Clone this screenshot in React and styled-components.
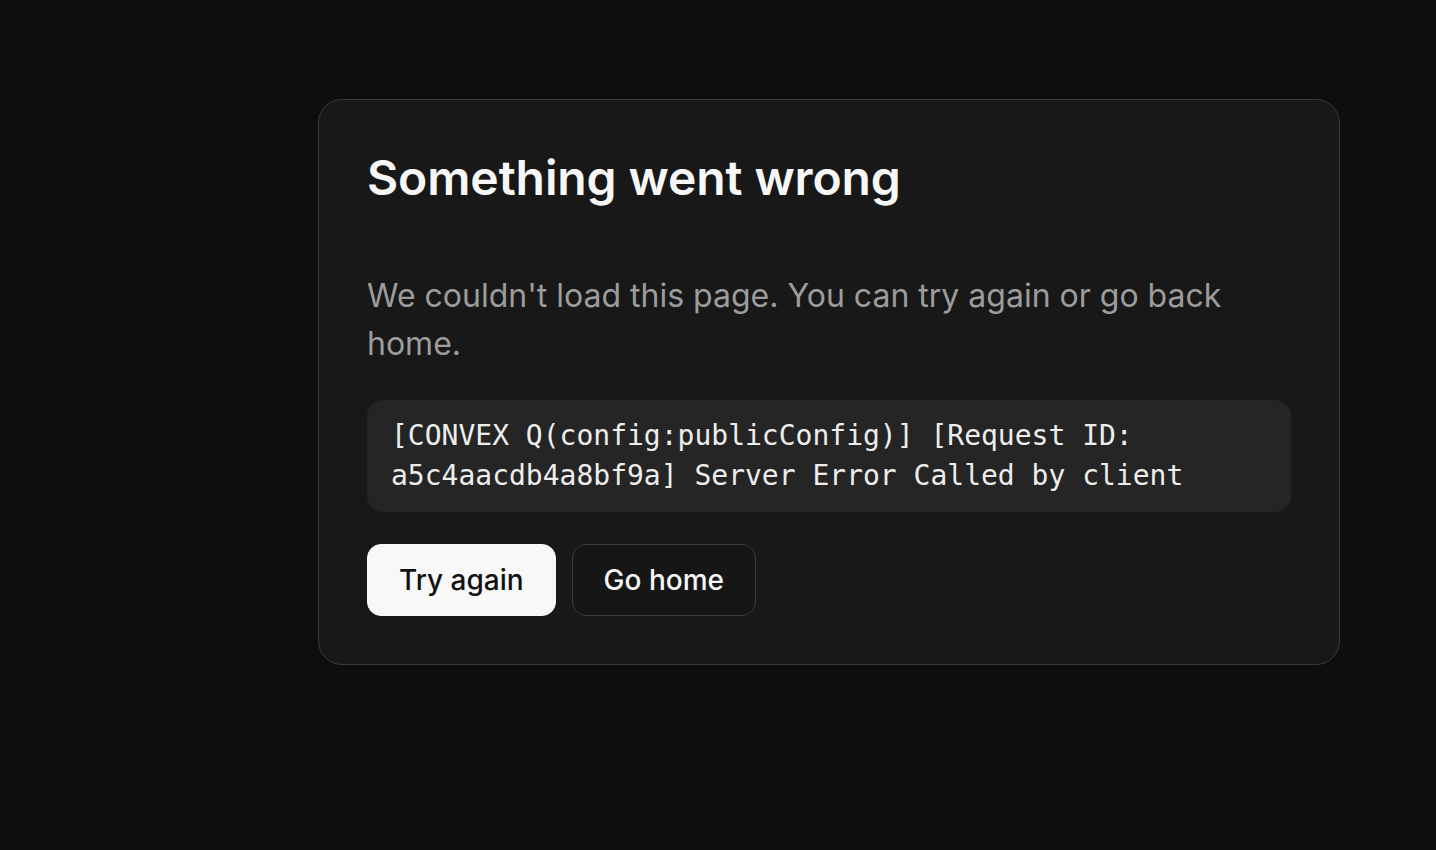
import React from "react";
import styled, { createGlobalStyle } from "styled-components";

const GlobalStyle = createGlobalStyle`
  html, body {
    margin: 0;
    padding: 0;
    background: #0e0e0e;
  }
  body {
    font-family: Inter, "Noto Sans", "Liberation Sans", sans-serif;
    -webkit-font-smoothing: antialiased;
  }
`;

const Shell = styled.div`
  display: grid;
  grid-template-columns: 222px 1fr;
  min-height: 850px;
  background: #0e0e0e;
`;

const Aside = styled.aside``;

const Main = styled.main`
  padding: 99px 96px 0;
`;

const Card = styled.section`
  box-sizing: border-box;
  width: 1022px;
  margin: 0 auto;
  padding: 48px;
  background: #181818;
  border: 1px solid #3a3a3a;
  border-radius: 24px;
`;

const Title = styled.h1`
  margin: 0 0 64px;
  font-size: 48px;
  line-height: 60px;
  font-weight: 600;
  color: #f7f7f7;
  letter-spacing: -0.1px;
`;

const Message = styled.p`
  margin: 0 0 32px;
  font-size: 32px;
  line-height: 48px;
  font-weight: 400;
  color: #9c9c9c;
`;

const ErrorDetail = styled.pre`
  margin: 0 0 32px;
  padding: 16px 24px;
  background: #252525;
  border-radius: 16px;
  font-family: "DejaVu Sans Mono", "Liberation Mono", monospace;
  font-size: 28px;
  line-height: 40px;
  color: #ededed;
  white-space: pre-wrap;
  word-break: normal;
`;

const Actions = styled.div`
  display: flex;
  gap: 16px;
`;

const Button = styled.button`
  box-sizing: border-box;
  height: 72px;
  padding: 0 31px;
  border-radius: 14px;
  font-family: inherit;
  font-size: 28px;
  font-weight: 500;
  line-height: 40px;
  cursor: pointer;
  border: 1px solid ${(p) => (p.$primary ? "#f8f8f8" : "#3c3c3c")};
  background: ${(p) => (p.$primary ? "#f8f8f8" : "#161616")};
  color: ${(p) => (p.$primary ? "#121212" : "#f5f5f5")};
`;

export default function App() {
  return (
    <>
      <GlobalStyle />
      <Shell>
        <Aside />
        <Main>
          <Card>
            <Title>Something went wrong</Title>
            <Message>
              We couldn't load this page. You can try again or go back home.
            </Message>
            <ErrorDetail>
              [CONVEX Q(config:publicConfig)] [Request ID: a5c4aacdb4a8bf9a]
              Server Error Called by client
            </ErrorDetail>
            <Actions>
              <Button $primary>Try again</Button>
              <Button>Go home</Button>
            </Actions>
          </Card>
        </Main>
      </Shell>
    </>
  );
}
